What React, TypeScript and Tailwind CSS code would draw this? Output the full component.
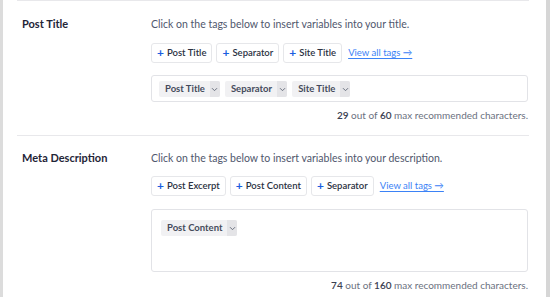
import React from 'react';

type Section = {
  label: string;
  help: string;
  buttons: string[];
  chips: string[];
  count: number;
  max: number;
  tall?: boolean;
};

const sections: Section[] = [
  {
    label: 'Post Title',
    help: 'Click on the tags below to insert variables into your title.',
    buttons: ['Post Title', 'Separator', 'Site Title'],
    chips: ['Post Title', 'Separator', 'Site Title'],
    count: 29,
    max: 60,
  },
  {
    label: 'Meta Description',
    help: 'Click on the tags below to insert variables into your description.',
    buttons: ['Post Excerpt', 'Post Content', 'Separator'],
    chips: ['Post Content'],
    count: 74,
    max: 160,
    tall: true,
  },
];

const Chevron = () => (
  <svg width="7" height="5" viewBox="0 0 7 5" fill="none">
    <path d="M1 1.2l2.5 2.5L6 1.2" stroke="#6b7280" strokeWidth="1" />
  </svg>
);

const Row = ({ s, first }: { s: Section; first: boolean }) => (
  <div className={`flex mx-[17px] border-t border-[#e8e8eb] ${first ? 'pt-[16px] pb-[13px]' : 'pt-[15px] pb-[7px]'}`}>
    <div className="w-[134px] pl-[5px] text-[11px] font-bold text-[#1f2537] leading-[14px]">{s.label}</div>
    <div className="flex-1 mr-[1px]">
      <p className="text-[10.5px] text-[#50576d] leading-[14px]">{s.help}</p>
      <div className={`flex items-center gap-[4px] ${first ? 'mt-[12px]' : 'mt-[11px]'}`}>
        {s.buttons.map((b) => (
          <button
            key={b}
            className="h-[20px] px-[5px] flex items-center gap-[3px] bg-white border border-[#e6e7ea] rounded-[3px] text-[9.5px] font-semibold text-[#2b3142]"
          >
            <span className="text-[#1a5ee0] text-[12px] font-bold leading-none">+</span>
            {b}
          </button>
        ))}
        <a className="ml-[2px] text-[9.5px] text-[#3b82f6] underline underline-offset-2">View all tags →</a>
      </div>
      <div
        className={`border border-[#e2e3e7] rounded-[3px] px-[7px] pt-[5px] flex items-start gap-[5px] ${s.tall ? 'mt-[13px] h-[63px] pt-[10px] px-[9px]' : 'mt-[12px] h-[27px]'}`}
      >
        {s.chips.map((c) => (
          <span key={c} className="flex h-[16px] bg-[#f1f1f3] rounded-[2px] text-[9.5px] font-bold text-[#454b5c]">
            <span className="pl-[6px] pr-[5px] flex items-center">{c}</span>
            <span className="w-[10px] bg-[#e4e4e7] flex items-center justify-center rounded-r-[2px]">
              <Chevron />
            </span>
          </span>
        ))}
      </div>
      <p className="mt-[6px] text-right text-[10px] text-[#6b7180] leading-[14px]">
        <span className="text-[#3a4050] font-semibold">{s.count}</span> out of{' '}
        <span className="text-[#3a4050] font-semibold">{s.max}</span> max recommended characters.
      </p>
    </div>
  </div>
);

export default function App() {
  return (
    <div
      className="w-[550px] h-[297px] bg-white border-l-[3px] border-l-[#dcdcdc] border-r-[4px] border-r-[#d6d6d6] overflow-hidden"
      style={{ fontFamily: 'Lato, "Open Sans", sans-serif' }}
    >
      <div className="ml-[-3px]">
        {sections.map((s, i) => (
          <Row key={s.label} s={s} first={i === 0} />
        ))}
      </div>
    </div>
  );
}
